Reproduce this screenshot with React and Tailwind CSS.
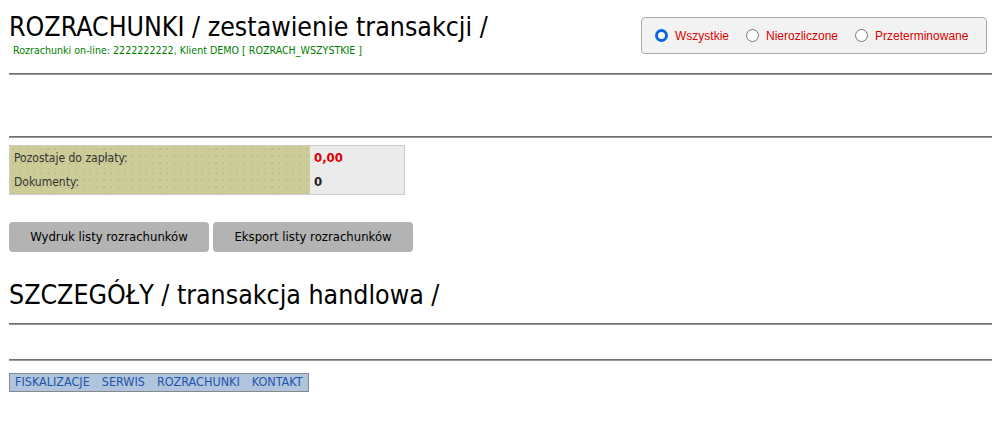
const tahoma = { fontFamily: '"DejaVu Sans Condensed", "DejaVu Sans", sans-serif' };

const Radio = ({ checked, label }) => (
  <label className="flex items-center gap-[7px] text-[12px] text-[#dd0000]">
    <span
      className={
        checked
          ? "w-[13px] h-[13px] rounded-full border-[3px] border-[#0a66e0] bg-white"
          : "w-[13px] h-[13px] rounded-full border border-[#767676] bg-white"
      }
    />
    {label}
  </label>
);

const Hr = () => (
  <div className="h-[2px] bg-[#707070] border-b border-[#999]" />
);

export default function App() {
  return (
    <div className="w-[992px] h-[444px] bg-white overflow-hidden" style={tahoma}>
      <div className="pl-[9px]">
        <div className="flex justify-between">
          <div className="pt-[12px]">
            <h1 className="text-[26.5px] leading-[30px] text-black font-normal">
              ROZRACHUNKI / zestawienie transakcji /
            </h1>
            <div className="text-[10.6px] leading-[14px] text-[#008000] pl-[4px] pt-[1px]">
              Rozrachunki on-line: 2222222222, Klient DEMO [ ROZRACH_WSZYSTKIE ]
            </div>
          </div>
          <div
            className="mt-[17px] mr-[5px] w-[346px] h-[37px] border border-[#aaa] rounded-[4px] bg-[#f2f2f2] flex items-center gap-[17px] pl-[13px]"
            style={{ fontFamily: '"Liberation Sans", Arial, sans-serif' }}
          >
            <Radio checked label="Wszystkie" />
            <Radio label="Nierozliczone" />
            <Radio label="Przeterminowane" />
          </div>
        </div>

        <div className="mt-[16px]">
          <Hr />
        </div>
        <div className="mt-[61px]">
          <Hr />
        </div>

        <div className="mt-[7px] w-[396px] border border-[#ccc] text-[12px]">
          <div className="flex h-[24px]">
            <div className="w-[300px] bg-[#cccc99] bg-[radial-gradient(#bdbd8c_1px,transparent_1px)] bg-[length:7px_7px] pl-[4px] flex items-center text-[#333]">
              Pozostaje do zapłaty:
            </div>
            <div className="flex-1 bg-[#ebebeb] pl-[4px] flex items-center text-[#dd0000] font-bold text-[13px]">
              0,00
            </div>
          </div>
          <div className="flex h-[24px]">
            <div className="w-[300px] bg-[#cccc99] bg-[radial-gradient(#bdbd8c_1px,transparent_1px)] bg-[length:7px_7px] pl-[4px] flex items-center text-[#333]">
              Dokumenty:
            </div>
            <div className="flex-1 bg-[#ebebeb] pl-[4px] flex items-center text-[#222] font-bold text-[13px]">
              0
            </div>
          </div>
        </div>

        <div className="mt-[27px] flex gap-[4px]">
          <button className="w-[200px] h-[30px] rounded-[4px] bg-[#b3b3b3] text-[13px] text-black">
            Wydruk listy rozrachunków
          </button>
          <button className="w-[200px] h-[30px] rounded-[4px] bg-[#b3b3b3] text-[13px] text-black">
            Eksport listy rozrachunków
          </button>
        </div>

        <h2 className="mt-[28px] text-[26.5px] leading-[30px] text-black font-normal">
          SZCZEGÓŁY / transakcja handlowa /
        </h2>

        <div className="mt-[13px]">
          <Hr />
        </div>
        <div className="mt-[34px]">
          <Hr />
        </div>

        <div className="mt-[12px] inline-flex h-[19px] items-center gap-[12px] border border-[#888] bg-[#b0c4de] px-[5px] text-[12.5px] text-[#2255aa]">
          <span>FISKALIZACJE</span>
          <span>SERWIS</span>
          <span>ROZRACHUNKI</span>
          <span>KONTAKT</span>
        </div>
      </div>
    </div>
  );
}
